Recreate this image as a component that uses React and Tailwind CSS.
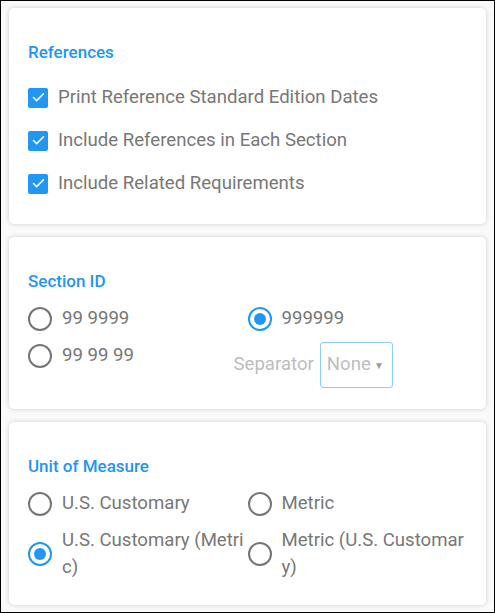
import { Check } from 'lucide-react'

const Checkbox = ({ label }) => (
  <div className="flex items-center h-[43px]">
    <span className="w-[20px] h-[20px] rounded-[2px] bg-[#2196f3] flex items-center justify-center shrink-0">
      <Check size={15} strokeWidth={2.5} className="text-white" />
    </span>
    <span className="ml-[10px] text-[18.6px] text-[#777777]">{label}</span>
  </div>
)

const Radio = ({ label, checked }) => (
  <div className="flex items-center min-h-[37px] py-[5px]">
    <span
      className={`w-[24px] h-[24px] rounded-full border-[2.5px] flex items-center justify-center shrink-0 ${
        checked ? 'border-[#2196f3]' : 'border-[#757575]'
      }`}
    >
      {checked && <span className="w-[12px] h-[12px] rounded-full bg-[#2196f3]" />}
    </span>
    <span className="ml-[10px] text-[18.6px] leading-[27px] text-[#777777] break-all">{label}</span>
  </div>
)

const Card = ({ title, children, className = '' }) => (
  <section className={`bg-white rounded-[5px] shadow-[0_0_5px_rgba(0,0,0,0.18)] mx-[8px] px-[19px] ${className}`}>
    <h2 className="text-[17px] font-medium text-[#2196f3] leading-[20px]">{title}</h2>
    {children}
  </section>
)

export default function App() {
  return (
    <div
      className="w-[495px] h-[613px] border border-black bg-[#fafafa] pt-[7px] flex flex-col gap-[13px] overflow-hidden"
      style={{ fontFamily: 'Roboto, "Liberation Sans", sans-serif' }}
    >
      {/* References */}
      <Card title="References" className="pt-[34px] pb-[20px] h-[216px]">
        <div className="mt-[14px]">
          <Checkbox label="Print Reference Standard Edition Dates" />
          <Checkbox label="Include References in Each Section" />
          <Checkbox label="Include Related Requirements" />
        </div>
      </Card>

      {/* Section ID */}
      <Card title="Section ID" className="pt-[34px] h-[172px]">
        <div className="grid grid-cols-2 mt-[9px]">
          <div>
            <Radio label="99 9999" />
            <Radio label="99 99 99" />
          </div>
          <div>
            <Radio label="999999" checked />
            <div className="flex items-center ml-[-14px] mt-[5px]">
              <span className="text-[18.6px] text-[#bdbdbd]">Separator</span>
              <div className="ml-[6px] w-[73px] h-[46px] border border-[#90caf9] rounded-[3px] flex items-center pl-[6px] pr-[8px] justify-between">
                <span className="text-[18.6px] text-[#bdbdbd]">None</span>
                <span className="text-[10px] text-[#9e9e9e]">▼</span>
              </div>
            </div>
          </div>
        </div>
      </Card>

      {/* Unit of Measure */}
      <Card title="Unit of Measure" className="pt-[34px] h-[183px]">
        <div className="grid grid-cols-2 mt-[9px]">
          <Radio label="U.S. Customary" />
          <Radio label="Metric" />
          <Radio label="U.S. Customary (Metric)" checked />
          <Radio label="Metric (U.S. Customary)" />
        </div>
      </Card>
    </div>
  )
}
